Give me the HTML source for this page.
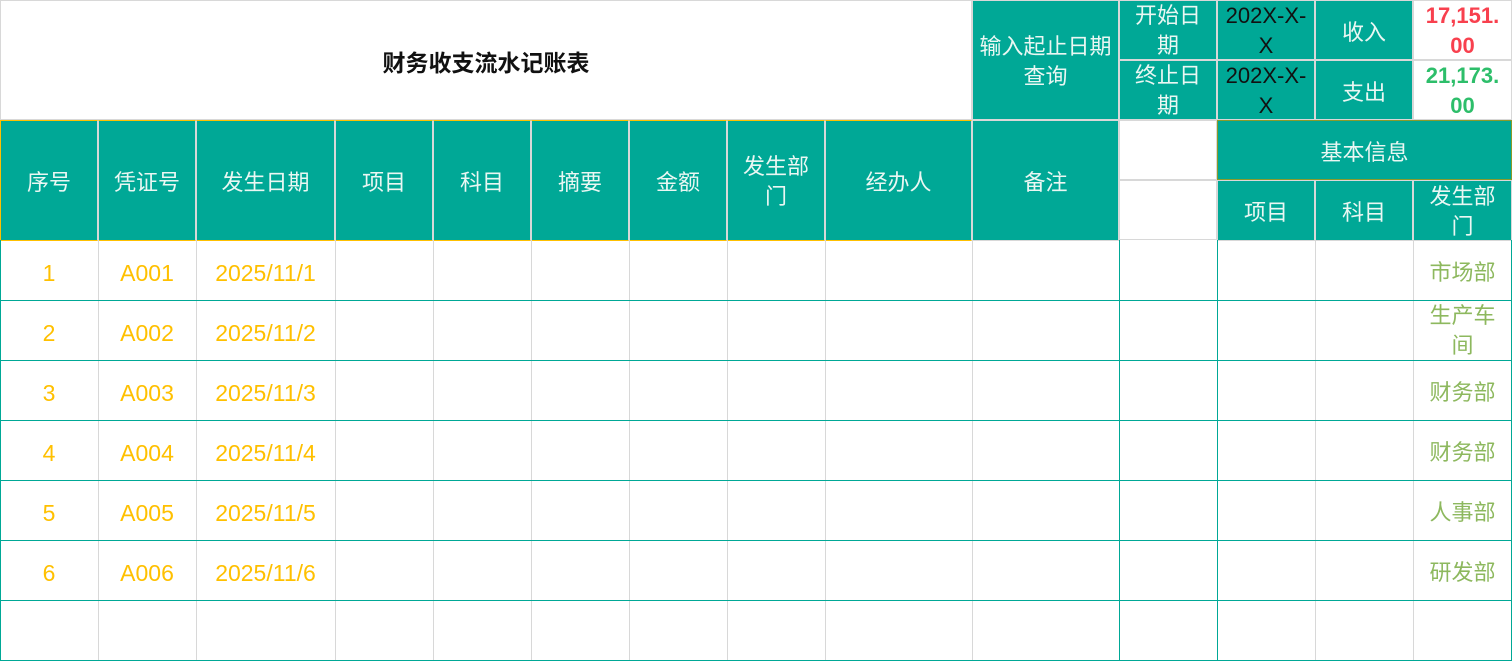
<!DOCTYPE html>
<html><head><meta charset="utf-8"><style>
body{margin:0;width:1512px;height:661px;position:relative;background:#fff;overflow:hidden;font-family:"Liberation Sans","Noto Sans CJK SC",sans-serif;}
.c{position:absolute;box-sizing:border-box;display:flex;align-items:center;justify-content:center;text-align:center;font-size:22px;line-height:30px;padding-top:5px;}
.t{background:#00A896;color:#eaf7f3;border:1px solid #d8d8d8;}
.h{position:absolute;height:1px;background:#00A896;}
.v{position:absolute;width:1px;background:#d8d8d8;}
.o{color:#FFC000;font-size:23px;}
.g{color:#8DB85E;}
</style></head><body>
<div class="c" style="left:0;top:0;width:972px;height:120px;font-weight:bold;color:#111;border:1px solid #d8d8d8;font-size:23px">财务收支流水记账表</div>
<div class="c t" style="left:972px;top:0;width:147px;height:120px;padding-top:4px">输入起止日期<br>查询</div>
<div class="c t" style="left:1119px;top:0;width:98px;height:60px;padding:2px 12px 0">开始日期</div>
<div class="c t" style="left:1119px;top:60px;width:98px;height:60px;padding:2px 12px 0">终止日期</div>
<div class="c t" style="left:1217px;top:0;width:98px;height:60px;color:#111;padding-top:2px">202X-X-<br>X</div>
<div class="c t" style="left:1217px;top:60px;width:98px;height:60px;color:#111;padding-top:2px">202X-X-<br>X</div>
<div class="c t" style="left:1315px;top:0;width:98px;height:60px">收入</div>
<div class="c t" style="left:1315px;top:60px;width:98px;height:60px">支出</div>
<div class="c" style="left:1413px;top:0;width:99px;height:60px;color:#F8404E;font-weight:bold;border:1px solid #d8d8d8;padding-top:2px">17,151.<br>00</div>
<div class="c" style="left:1413px;top:60px;width:99px;height:60px;color:#2DBE6A;font-weight:bold;border:1px solid #d8d8d8;padding-top:2px">21,173.<br>00</div>
<div style="position:absolute;left:0;top:120px;width:972px;height:121px;background:#00A896;border-top:1px solid #FFC000;border-bottom:1px solid #FFC000;box-sizing:border-box"></div>
<div class="c t" style="left:0;top:120px;width:98px;height:121px;border-color:#FFC000 #d8d8d8 #FFC000 #FFC000">序号</div>
<div class="c t" style="left:98px;top:120px;width:98px;height:121px;border-color:#FFC000 #d8d8d8">凭证号</div>
<div class="c t" style="left:196px;top:120px;width:139px;height:121px;border-color:#FFC000 #d8d8d8">发生日期</div>
<div class="c t" style="left:335px;top:120px;width:98px;height:121px;border-color:#FFC000 #d8d8d8">项目</div>
<div class="c t" style="left:433px;top:120px;width:98px;height:121px;border-color:#FFC000 #d8d8d8">科目</div>
<div class="c t" style="left:531px;top:120px;width:98px;height:121px;border-color:#FFC000 #d8d8d8">摘要</div>
<div class="c t" style="left:629px;top:120px;width:98px;height:121px;border-color:#FFC000 #d8d8d8">金额</div>
<div class="c t" style="left:727px;top:120px;width:98px;height:121px;border-color:#FFC000 #d8d8d8;padding:2px 12px 0">发生部门</div>
<div class="c t" style="left:825px;top:120px;width:147px;height:121px;border-color:#FFC000 #d8d8d8">经办人</div>
<div class="c t" style="left:972px;top:120px;width:147px;height:121px">备注</div>
<div class="c" style="left:1119px;top:120px;width:98px;height:60px;border:1px solid #d8d8d8"></div>
<div class="c" style="left:1119px;top:180px;width:98px;height:60px;border:1px solid #d8d8d8"></div>
<div class="c t" style="left:1217px;top:120px;width:295px;height:60px;border-color:#8a9a2a">基本信息</div>
<div class="c t" style="left:1217px;top:180px;width:98px;height:61px">项目</div>
<div class="c t" style="left:1315px;top:180px;width:98px;height:61px">科目</div>
<div class="c t" style="left:1413px;top:180px;width:99px;height:61px;padding:2px 12px 0">发生部门</div>

<div class="v" style="left:0;top:240px;height:421px;background:#00A896"></div>
<div class="v" style="left:98px;top:240px;height:421px"></div>
<div class="v" style="left:196px;top:240px;height:421px"></div>
<div class="v" style="left:335px;top:240px;height:421px"></div>
<div class="v" style="left:433px;top:240px;height:421px"></div>
<div class="v" style="left:531px;top:240px;height:421px"></div>
<div class="v" style="left:629px;top:240px;height:421px"></div>
<div class="v" style="left:727px;top:240px;height:421px"></div>
<div class="v" style="left:825px;top:240px;height:421px"></div>
<div class="v" style="left:972px;top:240px;height:421px"></div>
<div class="v" style="left:1119px;top:240px;height:421px;background:#00A896"></div>
<div class="v" style="left:1217px;top:240px;height:421px;background:#00A896"></div>
<div class="v" style="left:1315px;top:240px;height:421px"></div>
<div class="v" style="left:1413px;top:240px;height:421px"></div>
<div class="v" style="left:1511px;top:240px;height:421px;background:#00A896"></div>
<div class="h" style="left:0;top:300px;width:1512px"></div>
<div class="h" style="left:0;top:360px;width:1512px"></div>
<div class="h" style="left:0;top:420px;width:1512px"></div>
<div class="h" style="left:0;top:480px;width:1512px"></div>
<div class="h" style="left:0;top:540px;width:1512px"></div>
<div class="h" style="left:0;top:600px;width:1512px"></div>
<div class="h" style="left:0;top:660px;width:1512px"></div>

<div class="c o" style="left:0;top:240px;width:98px;height:60px">1</div>
<div class="c o" style="left:98px;top:240px;width:98px;height:60px">A001</div>
<div class="c o" style="left:196px;top:240px;width:139px;height:60px">2025/11/1</div>
<div class="c o" style="left:0;top:300px;width:98px;height:60px">2</div>
<div class="c o" style="left:98px;top:300px;width:98px;height:60px">A002</div>
<div class="c o" style="left:196px;top:300px;width:139px;height:60px">2025/11/2</div>
<div class="c o" style="left:0;top:360px;width:98px;height:60px">3</div>
<div class="c o" style="left:98px;top:360px;width:98px;height:60px">A003</div>
<div class="c o" style="left:196px;top:360px;width:139px;height:60px">2025/11/3</div>
<div class="c o" style="left:0;top:420px;width:98px;height:60px">4</div>
<div class="c o" style="left:98px;top:420px;width:98px;height:60px">A004</div>
<div class="c o" style="left:196px;top:420px;width:139px;height:60px">2025/11/4</div>
<div class="c o" style="left:0;top:480px;width:98px;height:60px">5</div>
<div class="c o" style="left:98px;top:480px;width:98px;height:60px">A005</div>
<div class="c o" style="left:196px;top:480px;width:139px;height:60px">2025/11/5</div>
<div class="c o" style="left:0;top:540px;width:98px;height:60px">6</div>
<div class="c o" style="left:98px;top:540px;width:98px;height:60px">A006</div>
<div class="c o" style="left:196px;top:540px;width:139px;height:60px">2025/11/6</div>

<div class="c g" style="left:1413px;top:240px;width:99px;height:60px">市场部</div>
<div class="c g" style="left:1413px;top:300px;width:99px;height:60px;padding:2px 12px 0">生产车间</div>
<div class="c g" style="left:1413px;top:360px;width:99px;height:60px">财务部</div>
<div class="c g" style="left:1413px;top:420px;width:99px;height:60px">财务部</div>
<div class="c g" style="left:1413px;top:480px;width:99px;height:60px">人事部</div>
<div class="c g" style="left:1413px;top:540px;width:99px;height:60px">研发部</div>
</body></html>
